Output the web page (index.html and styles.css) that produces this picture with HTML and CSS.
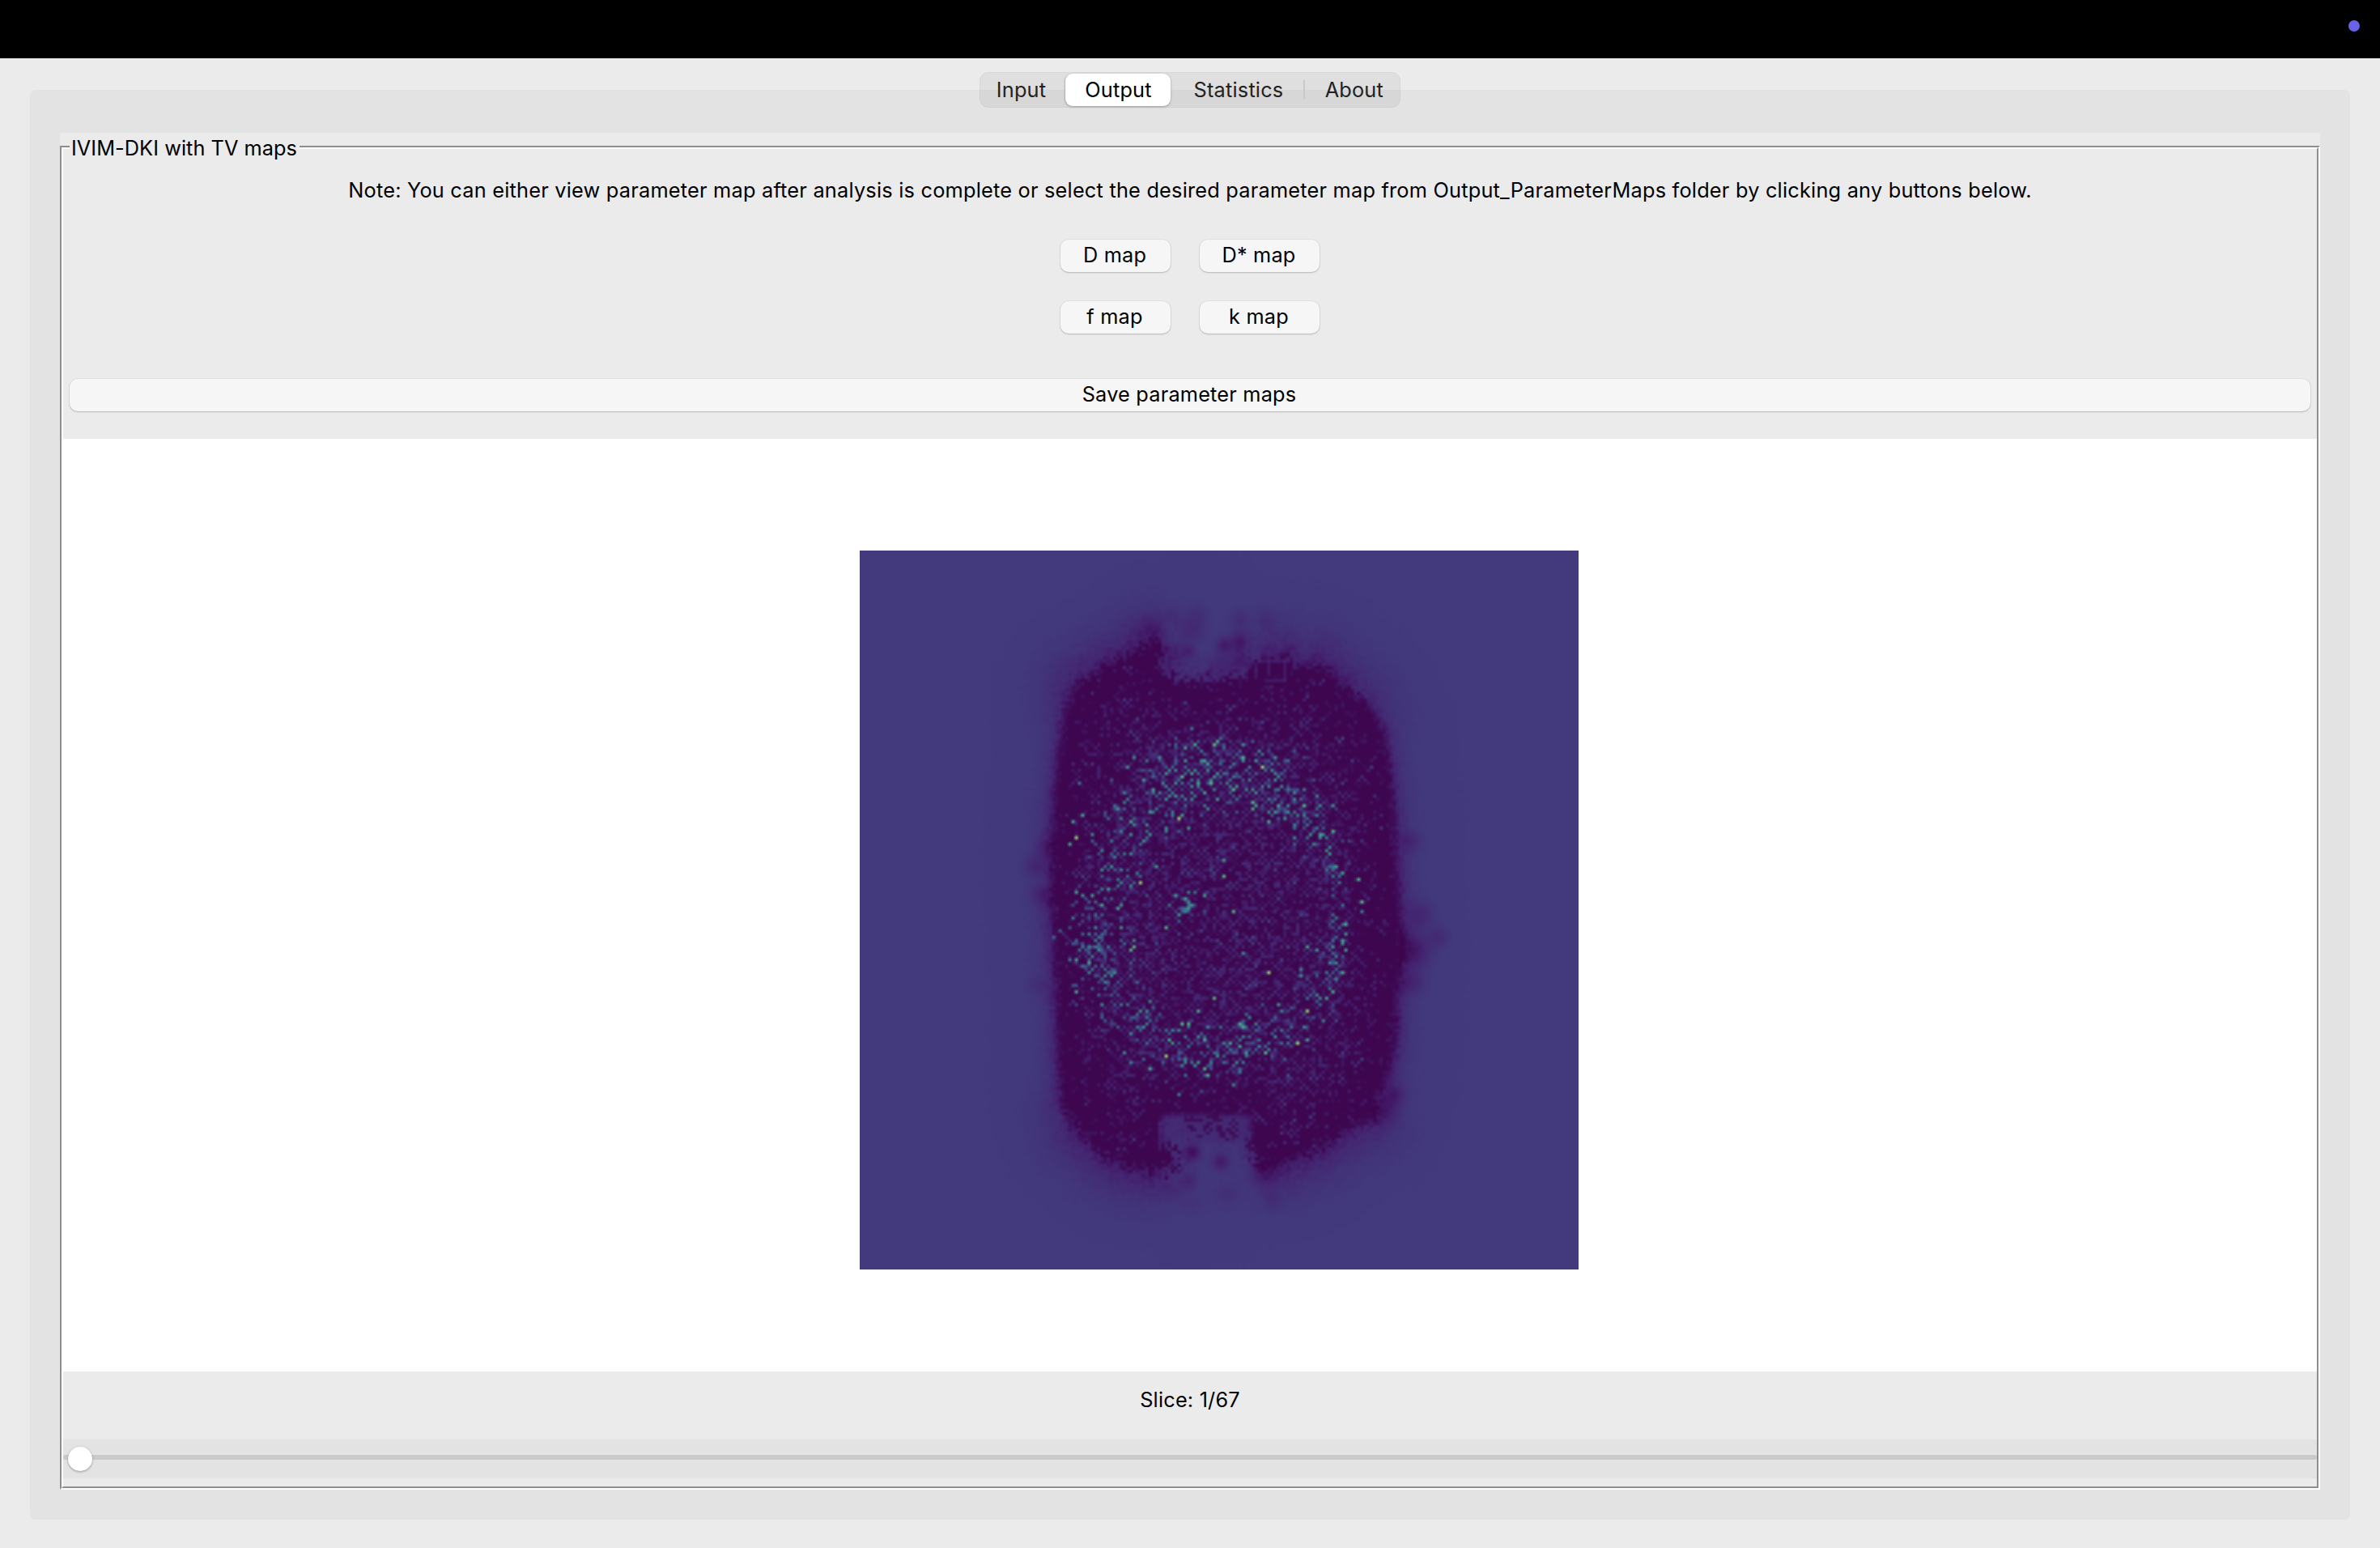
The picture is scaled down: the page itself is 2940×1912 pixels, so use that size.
FILE: index.html
```html
<!DOCTYPE html>
<html lang="en">
<head>
<meta charset="utf-8">
<title>IVIM-DKI</title>
<link rel="stylesheet" href="styles.css">
</head>
<body>
<div class="menubar"><span class="menubar-dot"></span></div>
<main class="window">
  <div class="tabs">
    <button class="tab tab-input">Input</button>
    <button class="tab tab-output active">Output</button>
    <button class="tab tab-statistics">Statistics</button>
    <button class="tab tab-about">About</button>
  </div>
  <section class="panel">
    <div class="group">
      <div class="group-outer">
        <div class="group-inner">
          <h1 class="legend"><span>IVIM-DKI with TV maps</span></h1>
          <p class="note"><span>Note: You can either view parameter map after analysis is complete or select the desired parameter map from Output_ParameterMaps folder by clicking any buttons below.</span></p>
          <div class="map-buttons">
            <button class="button">D map</button>
            <button class="button">D* map</button>
            <button class="button">f map</button>
            <button class="button">k map</button>
          </div>
          <button class="button save">Save parameter maps</button>
          <div class="figure"><canvas id="map" class="map" width="224" height="224"></canvas></div>
          <p class="slice">Slice: 1/67</p>
          <div class="slider"><div class="track"></div><div class="thumb"></div></div>
        </div>
      </div>
    </div>
  </section>
</main>
<script src="map.js"></script>
</body>
</html>
```
FILE: styles.css
```css
* { box-sizing: border-box; }
html, body { margin: 0; height: 100%; }
body {
  display: flex;
  flex-direction: column;
  background: #ebebeb;
  color: #000;
  font-family: Inter, "Liberation Sans", sans-serif;
  font-size: 25.3px;
  line-height: 32px;
  letter-spacing: .2px;
  overflow: hidden;
}
button { font: inherit; color: inherit; border: 0; padding: 0; letter-spacing: inherit; white-space: nowrap; }
h1, p { margin: 0; font-size: inherit; font-weight: 400; }

.menubar { height: 72px; flex: none; background: #000; display: flex; justify-content: flex-end; padding: 25px 25px 0 0; }
.menubar-dot { width: 14px; height: 14px; border-radius: 50%; background: #6863e8; }

.window { flex: 1; display: flex; flex-direction: column; align-items: center; padding: 17px 37px 35px; }

.tabs {
  position: relative;
  z-index: 1;
  display: flex;
  align-items: center;
  width: 520px;
  height: 44px;
  margin-bottom: -22px;
  border-radius: 11px;
  background: rgba(0, 0, 0, .05);
  box-shadow: inset 0 0 0 1px rgba(0, 0, 0, .03);
  color: #222;
}
.tab { height: 40px; background: none; border-radius: 9px; }
.tab-input { width: 106px; padding-right: 3px; }
.tab-output { width: 130px; padding-left: 1px; }
.tab-statistics { width: 165px; padding-left: 3px; }
.tab-about { width: 119px; display: flex; align-items: center; justify-content: space-between; padding-right: 21px; }
.tab-about::before { content: ""; width: 2px; height: 24px; margin-left: -1px; background: #c9c9c9; }
.tab.active { background: #fff; color: #000; box-shadow: 0 1px 3px rgba(0, 0, 0, .28), -2px 0 0 -1px rgba(0, 0, 0, .1); }

.panel { flex: 1; width: 100%; background: #e3e3e3; border-radius: 7px; padding: 53px 37px 37px; display: flex; }
.group { flex: 1; background: #ebebeb; padding-top: 16px; display: flex; }
.group-outer { flex: 1; display: flex; border: 2px solid; border-color: #8e8e8e #fff #fff #8e8e8e; }
.group-inner { flex: 1; display: flex; flex-direction: column; align-items: center; border: 2px solid; border-color: #fff #8e8e8e #8e8e8e #fff; }

.legend { align-self: flex-start; height: 32px; margin: -17px 0 0 8px; padding: 0 3px 0 2px; background: #ebebeb; letter-spacing: .05px; }
.note { margin-top: 20px; height: 32px; white-space: nowrap; letter-spacing: .224px; }
.map-buttons { display: grid; grid-template-columns: 136px 148px; gap: 36px; margin-top: 45px; }
.button { height: 40px; padding: 0 2px 2px 0; border-radius: 10px; background: #f6f6f6; box-shadow: 0 0 0 1px rgba(0, 0, 0, .035), 0 1px 2px rgba(0, 0, 0, .2); }
.save { width: 2768px; margin-top: 56px; }
.figure { align-self: stretch; height: 1152px; margin-top: 34px; padding: 138px 0 0 984px; background: #fff; }
.map { display: block; width: 888px; height: 888px; background: #423a7c; }
.slice { margin-top: 19px; height: 32px; }
.slider { align-self: stretch; position: relative; height: 48px; margin-top: 33px; padding-top: 19px; background: #e3e3e3; }
.track { height: 6px; border-radius: 3px; background: #cacaca; }
.thumb { position: absolute; left: 6px; top: 9px; width: 30px; height: 30px; border-radius: 50%; background: #fff; box-shadow: 0 1px 3px rgba(0, 0, 0, .35); }
```
FILE: map.js
```js
// Parameter map: 224 x 224 voxels coloured with a viridis-like scale.
(function () {
  var N = 224;
  var BASE = 0.2;
  var STOPS = [
    [0, 61, 4, 77], [0.1, 67, 30, 108], [0.2, 66, 58, 125], [0.35, 58, 92, 140],
    [0.5, 54, 128, 143], [0.65, 64, 160, 143], [0.8, 90, 192, 130], [1, 180, 220, 100]
  ];
  var OUTLINE = [
    [65, 46], [68, 41], [76, 36], [84, 32], [88, 29], [92, 28], [95, 31], [93, 36], [98, 40], [110, 40],
    [119, 39], [121, 36], [127, 33], [133, 33], [136, 37], [143, 35], [150, 41], [157, 47],
    [163, 56], [165, 66], [166, 76], [167, 95], [168, 110], [169, 125], [167, 138], [167, 152],
    [165, 162], [161, 170], [160, 177], [152, 181], [143, 187], [133, 191], [126, 191], [122, 188],
    [121, 180], [118, 178], [114, 182], [108, 178], [94, 178], [95, 184], [99, 190], [98, 193],
    [91, 194], [82, 192], [75, 188], [68, 182], [63, 172], [62, 154], [61, 130], [60, 112],
    [60, 92], [61, 75], [63, 58]
  ];
  var PEAKS = [
    67,89, 65,91, 99,83, 125,67, 129,64, 83,67, 85,64, 82,75, 105,72, 100,70, 95,86, 138,79,
    135,77, 135,75, 130,79, 127,84, 132,83, 147,79, 143,88, 147,87, 148,98, 150,100, 87,103,
    84,104, 78,98, 102,109, 102,111, 103,110, 116,112, 107,107, 113,96, 113,101, 155,102,
    156,109, 156,112, 119,64, 119,60, 111,59, 110,60, 104,60, 69,82, 66,84, 67,106, 72,107,
    75,110, 81,110, 80,111, 93,64, 90,81, 88,71, 122,78, 116,74, 98,107, 101,108, 101,112,
    99,113, 106,65, 109,72, 91,74, 85,121, 85,123, 84,124, 71,128, 67,127, 67,137, 75,141,
    127,131, 119,125, 137,130, 137,132, 110,139, 105,143, 100,147, 102,147, 95,157, 101,158,
    107,161, 107,152, 136,153, 139,143, 130,141, 131,143, 126,156, 151,124, 150,121, 151,116,
    150,131, 148,133, 147,137, 145,139, 139,123, 139,152, 119,148, 118,147, 90,161, 84,159,
    82,156, 108,163, 95,117
  ];
  // Soft low-value spots: x, y, radius, depth
  var SPOTS = [
    [113, 29, 2.2, .09], [118, 28, 3, .11], [103, 24, 4, .05], [118, 21, 3, .04], [126, 21, 3, .03],
    [105, 19, 3, .03], [97, 20, 3, .03], [90, 24, 4, .05], [102, 31, 2, .07], [118, 34, 3, .08],
    [98, 33, 4, .06], [112, 35, 4, .05], [54, 98, 3, .06], [56, 107, 3, .06], [57, 92, 3, .05],
    [55, 135, 3, .03], [171, 90, 3, .06], [172, 124, 5, .1], [174, 113, 4, .06], [180, 120, 3, .05],
    [171, 134, 4, .06], [166, 169, 3, .09], [163, 174, 4, .08], [112, 190, 2.5, .1],
    [103, 187, 2.5, .14], [102, 196, 2.5, .06], [114, 200, 4, .03], [97, 199, 3, .04],
    [128, 202, 3, .03], [126, 193, 4, .08], [103, 203, 3, .02]
  ];

  var seed = 20231;
  function rnd() {
    seed = (seed + 0x6D2B79F5) | 0;
    var t = Math.imul(seed ^ (seed >>> 15), 1 | seed);
    t = (t + Math.imul(t ^ (t >>> 7), 61 | t)) ^ t;
    return ((t ^ (t >>> 14)) >>> 0) / 4294967296;
  }
  function clamp(v, a, b) { return Math.max(a, Math.min(b, v)); }
  function smooth(a, b, v) { v = clamp((v - a) / (b - a), 0, 1); return v * v * (3 - 2 * v); }
  function gauss(dx, dy) { return Math.exp(-(dx * dx + dy * dy)); }

  // Signed distance to the outline, positive inside.
  function distance(x, y) {
    var inside = false, best = 1e9;
    for (var i = 0, j = OUTLINE.length - 1; i < OUTLINE.length; j = i++) {
      var a = OUTLINE[i], b = OUTLINE[j];
      if ((a[1] > y) !== (b[1] > y) && x < (b[0] - a[0]) * (y - a[1]) / (b[1] - a[1]) + a[0]) inside = !inside;
      var ex = b[0] - a[0], ey = b[1] - a[1];
      var t = clamp(((x - a[0]) * ex + (y - a[1]) * ey) / (ex * ex + ey * ey), 0, 1);
      best = Math.min(best, Math.hypot(x - a[0] - t * ex, y - a[1] - t * ey));
    }
    return inside ? best : -best;
  }

  function colour(v) {
    v = clamp(v, 0, 1);
    for (var i = 1; i < STOPS.length; i++) {
      if (v <= STOPS[i][0]) {
        var a = STOPS[i - 1], b = STOPS[i], t = (v - a[0]) / (b[0] - a[0]);
        return [1, 2, 3].map(function (k) { return a[k] + (b[k] - a[k]) * t; });
      }
    }
  }

  // Relative density of bright voxels: upper arc, left patch, right arc, lower arc.
  function density(x, y) {
    var th = Math.atan2((y - 111) / 49, (x - 110) / 39);
    var r = Math.hypot((x - 110) / 39, (y - 111) / 49);
    var up = Math.max(0, -Math.sin(th)), down = Math.max(0, Math.sin(th));
    var left = Math.max(0, -Math.cos(th)), right = Math.max(0, Math.cos(th));
    var centre = 0.99 - 0.13 * up - 0.02 * left - 0.04 * down;
    var width = 0.05 + 0.14 * up + 0.06 * left + 0.08 * down;
    var d = Math.exp(-Math.pow((r - centre) / width, 2)) * (0.62 + 0.1 * up + 0.4 * right * right - 0.3 * left * left);
    d += 0.8 * gauss((x - 73) / 7, (y - 124) / 13);
    d += 0.8 * gauss((x - 101) / 4, (y - 111) / 4);
    d += 0.8 * gauss((x - 118) / 5, (y - 149) / 5);
    d += 0.5 * gauss((x - 83) / 6, (y - 102) / 5);
    d += 0.4 * gauss((x - 94) / 9, (y - 75) / 8);
    return Math.min(d, 1);
  }

  var grid = new Float32Array(N * N), x, y, i, k;
  var diag = new Float32Array(N * N);
  for (i = 0; i < N * N; i++) diag[i] = rnd();

  for (y = 0; y < N; y++) {
    for (x = 0; x < N; x++) {
      var d = distance(x + .5, y + .5);
      var ends = smooth(48, 80, Math.abs(y - 111));
      var gap = ends * smooth(90, 99, x) * (1 - smooth(119, 128, x));
      var v;
      d += (rnd() - .5) * (1.4 + 2.4 * ends + 1.5 * gap);
      if (d > 0) {
        v = 0.006;
        var rim = clamp((d - 3) / 20, 0, 1);
        var lattice = ((x + y) & 1) ? .35 : 1;
        var q = rnd();
        // Weak diagonal texture
        if (q < (.08 + .68 * rim) * lattice) v += rnd() * (.07 + .08 * rim);
        i = y * N + x;
        var link = diag[i] + (diag[i - N - 1] + diag[i - N + 1]) * .35;
        if (d > 3 && link < .4 && lattice === 1) v += .06 + rnd() * .08;
        var den = density(x, y);
        if (lattice === 1 && rnd() < den * .48) v += .1 + Math.pow(rnd(), 1.1) * .46;
        else if (rnd() < den * .12) v += .1 + rnd() * .26;
        if (d < 1.2) v += .05 * rnd();
      } else {
        var o = -d;
        var open = BASE - .03 * Math.exp(-o / 12) - .07 * Math.exp(-o / 1.6);
        var capped = BASE - .09 * Math.exp(-Math.pow(o / 9, 1.35)) - .05 * Math.exp(-o / 1.6);
        var side = BASE - .15 * Math.exp(-o / 1.9) - .02 * Math.exp(-o / 9);
        v = side + (capped - side) * ends;
        v += (open - v) * gap;
        v += (rnd() - .5) * .025 * Math.exp(-o / 6);
      }
      for (k = 0; k < SPOTS.length; k++) {
        var s = SPOTS[k];
        if (d < 1) v -= s[3] * gauss((x - s[0]) / s[2], (y - s[1]) / s[2]);
      }
      // Mottled shelf above the lower opening
      var shelf = smooth(92, 96, x) * (1 - smooth(119, 123, x)) * smooth(174, 177, y) * (1 - smooth(181, 185, y));
      if (shelf > 0) {
        var core = x > 100 && x < 118 && rnd() < .38;
        v += ((core ? .04 : .125 + rnd() * .03) - v) * shelf;
      }
      grid[y * N + x] = v;
    }
  }
  // Pale ringing lines around the two openings
  [[117, 25, 5, 0], [111, 36, 10, 0], [120, 24, 0, 11], [102, 32, 0, 8], [105, 32, 0, 7],
   [124, 34, 8, 0], [132, 34, 0, 6], [126, 40, 6, 0], [93, 178, 0, 8], [98, 34, 12, 0],
   [123, 35, 0, 4], [127, 33, 0, 5]].forEach(function (l) {
    for (var t = 0; t <= Math.max(l[2], l[3]); t++) {
      var p = (l[1] + (l[3] ? t : 0)) * N + l[0] + (l[2] ? t : 0);
      grid[p] = grid[p] * .5 + .15 * .5;
    }
  });
  for (i = 0; i < PEAKS.length; i += 2) grid[PEAKS[i + 1] * N + PEAKS[i]] = .52 + rnd() * .28;
  [[67, 89], [99, 83], [125, 67], [87, 103], [136, 153], [127, 131], [139, 143], [95, 157]].forEach(function (p) {
    grid[p[1] * N + p[0]] = .93;
  });

  var ctx = document.getElementById('map').getContext('2d');
  var img = ctx.createImageData(N, N);
  for (i = 0; i < N * N; i++) {
    var c = colour(grid[i]);
    img.data[i * 4] = c[0];
    img.data[i * 4 + 1] = c[1];
    img.data[i * 4 + 2] = c[2];
    img.data[i * 4 + 3] = 255;
  }
  ctx.putImageData(img, 0, 0);
})();
```
